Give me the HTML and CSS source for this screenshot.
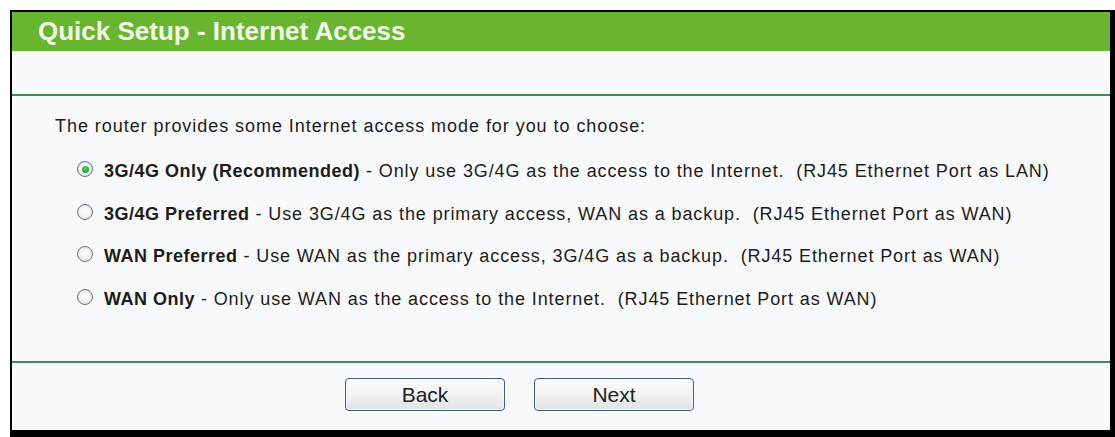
FILE: index.html
```html
<!DOCTYPE html>
<html>
<head>
<meta charset="utf-8">
<title>Quick Setup - Internet Access</title>
<link rel="stylesheet" href="styles.css">
</head>
<body>
<div class="frame">
  <div class="header">Quick Setup - Internet Access</div>
  <div class="spacer"></div>
  <div class="rule"></div>
  <div class="content">
    <p class="intro">The router provides some Internet access mode for you to choose:</p>
    <ul class="options">
      <li class="option"><span class="radio checked"></span><span class="label"><b>3G/4G Only (Recommended)</b> - Only use 3G/4G as the access to the Internet.&nbsp; (RJ45 Ethernet Port as LAN)</span></li>
      <li class="option"><span class="radio"></span><span class="label"><b>3G/4G Preferred</b> - Use 3G/4G as the primary access, WAN as a backup.&nbsp; (RJ45 Ethernet Port as WAN)</span></li>
      <li class="option"><span class="radio"></span><span class="label"><b>WAN Preferred</b> - Use WAN as the primary access, 3G/4G as a backup.&nbsp; (RJ45 Ethernet Port as WAN)</span></li>
      <li class="option"><span class="radio"></span><span class="label"><b>WAN Only</b> - Only use WAN as the access to the Internet.&nbsp; (RJ45 Ethernet Port as WAN)</span></li>
    </ul>
  </div>
  <div class="rule"></div>
  <div class="footer">
    <button class="btn" type="button">Back</button>
    <button class="btn" type="button">Next</button>
  </div>
</div>
</body>
</html>
```
FILE: styles.css
```css
html, body {
  margin: 0;
  padding: 0;
  background: #ffffff;
}

body {
  font-family: "Liberation Sans", Arial, sans-serif;
  color: #1c1c1c;
}

.frame {
  margin: 10px 0 0 10px;
  width: 1098px;
  height: 418px;
  border-style: solid;
  border-color: #000000;
  border-width: 2px 5px 7px 2px;
  background: #f8f9fa;
  display: flex;
  flex-direction: column;
}

.header {
  height: 39px;
  line-height: 39px;
  background: #68b62f;
  color: #f3f7e9;
  font-size: 26px;
  font-weight: bold;
  padding-left: 26px;
}

.spacer {
  height: 43px;
}

.rule {
  height: 2px;
  background: #3f8a5c;
}

.content {
  height: 265px;
  padding-top: 18px;
  box-sizing: border-box;
}

.intro {
  margin: 0;
  padding-left: 43px;
  font-size: 18px;
  line-height: 24px;
  letter-spacing: 0.95px;
}

.options {
  list-style: none;
  margin: 21px 0 0 0;
  padding: 0 0 0 65px;
  display: flex;
  flex-direction: column;
  gap: 18.5px;
}

.option {
  display: flex;
  align-items: center;
  gap: 11px;
  height: 24px;
  font-size: 18px;
  line-height: 24px;
  letter-spacing: 0.9px;
  white-space: nowrap;
}

.option b {
  font-weight: bold;
  letter-spacing: 0.5px;
}

.radio {
  display: block;
  width: 16px;
  height: 16px;
  border-radius: 50%;
  border: 1.5px solid #667789;
  background: radial-gradient(circle at 50% 45%, #ffffff 0%, #f3f3f3 50%, #d2d6da 100%);
  box-shadow: inset 0 0 0 1px #e4e8ec;
  box-sizing: border-box;
  position: relative;
  top: -2px;
  flex: none;
}

.radio.checked::after {
  content: "";
  position: absolute;
  left: 50%;
  top: 50%;
  width: 7px;
  height: 7px;
  margin: -3.5px 0 0 -3.5px;
  border-radius: 50%;
  background: radial-gradient(circle at 45% 40%, #5fcf63 0%, #27a232 70%, #1f8a2a 100%);
}

.footer {
  flex: 1;
  display: flex;
  gap: 29px;
  padding: 15px 0 0 333px;
  align-items: flex-start;
}

.btn {
  width: 160px;
  height: 33px;
  margin: 0;
  padding: 0;
  font-family: "Liberation Sans", Arial, sans-serif;
  font-size: 21px;
  color: #222222;
  border: 1px solid #3f5d7c;
  border-radius: 4px;
  background: linear-gradient(#fefefe, #f2f2f2 50%, #e2e2e2);
  box-shadow: inset 0 0 0 1px #f6f8fb;
}
```
